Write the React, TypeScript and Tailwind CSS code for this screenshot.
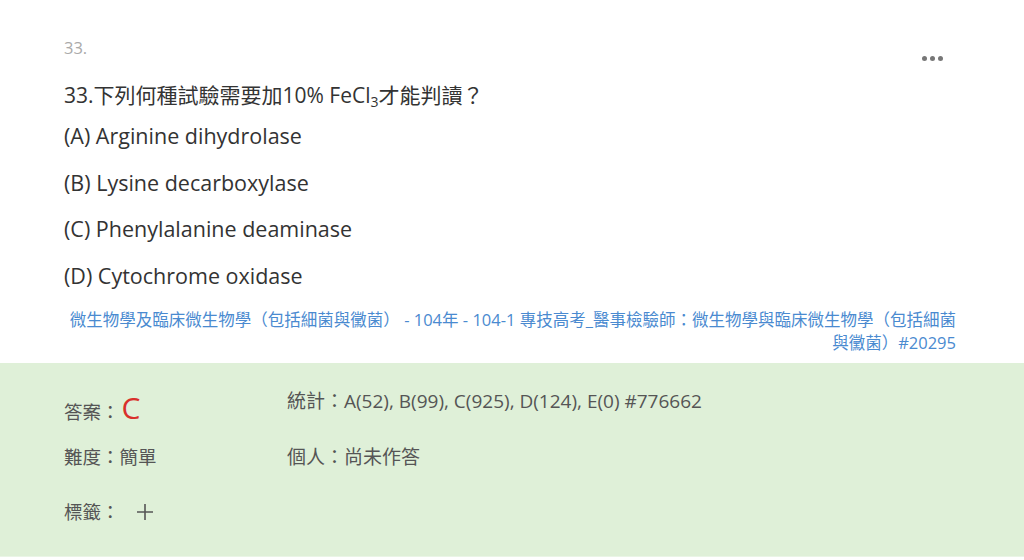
import React from "react";

const font = { fontFamily: '"Open Sans", "Noto Sans CJK TC", sans-serif' };

const options = [
  "(A) Arginine dihydrolase",
  "(B) Lysine decarboxylase",
  "(C) Phenylalanine deaminase",
  "(D) Cytochrome oxidase",
];

function PlusIcon() {
  return (
    <svg width="18" height="18" viewBox="0 0 18 18" className="text-[#555]">
      <path d="M9 1v16M1 9h16" stroke="currentColor" strokeWidth="1.6" fill="none" />
    </svg>
  );
}

export default function App() {
  return (
    <div className="h-[560px] w-[1024px] overflow-hidden bg-white" style={font}>
      <div className="relative pl-16 pr-[68px] pt-[37px]">
        <div className="text-[16.5px] leading-[22px] text-[#aaaaaa]">33.</div>
        <button className="absolute right-[81px] top-[56px] flex gap-[3px]">
          <span className="h-[5px] w-[5px] rounded-full bg-[#777]" />
          <span className="h-[5px] w-[5px] rounded-full bg-[#777]" />
          <span className="h-[5px] w-[5px] rounded-full bg-[#777]" />
        </button>
        <div className="mt-[22px] text-[21px] leading-7 text-[#333]">
          33.下列何種試驗需要加10% FeCl<sub className="text-[14px]">3</sub>才能判讀？
        </div>
        <ul className="mt-[13px] flex flex-col gap-[18.5px] text-[21.5px] leading-7 text-[#333]">
          {options.map((o) => (
            <li key={o}>{o}</li>
          ))}
        </ul>
        <div className="mt-[18px] text-right text-[16.5px] leading-[23px] text-[#4a8ad0]">
          微生物學及臨床微生物學（包括細菌與黴菌） - 104年 - 104-1 專技高考_醫事檢驗師：微生物學與臨床微生物學（包括細菌與黴菌）#20295
        </div>
      </div>
      <div className="mt-[9px] h-[194px] border-b border-[#eaf5e6] bg-[#dff0d8] pl-16 pt-[26px] text-[18.5px] leading-6 text-[#555]">
        <div className="grid grid-cols-[223px_1fr] grid-rows-[56px_55px_24px]">
          <div className="mt-[7px] flex items-baseline">
            答案：<span className="ml-[2px] text-[30px] font-medium leading-6 text-[#d9302c]">C</span>
          </div>
          <div className="text-[19px]">統計：A(52), B(99), C(925), D(124), E(0) #776662</div>
          <div>難度：簡單</div>
          <div className="text-[19px]">個人：尚未作答</div>
          <div className="flex items-center">
            標籤：
            <span className="ml-[16px]">
              <PlusIcon />
            </span>
          </div>
        </div>
      </div>
    </div>
  );
}
